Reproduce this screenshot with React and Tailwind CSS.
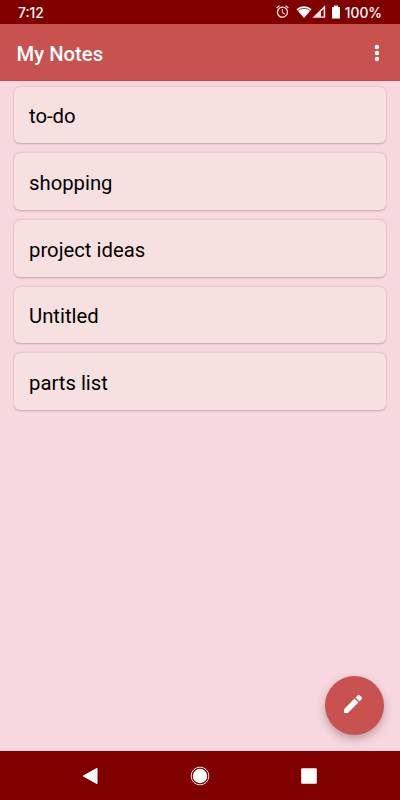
import React from "react";
import { MdAlarm } from "react-icons/md";

const notes = ["to-do", "shopping", "project ideas", "Untitled", "parts list"];

const StatusBar = () => {
  return (
    <div className="flex h-6 shrink-0 items-center bg-[#800000] pl-[18px] pr-[18px] font-['Inter',sans-serif] text-[13.8px] font-medium text-white">
      <span className="pt-[2px]">7:12</span>
      <div className="ml-auto flex h-6 items-center">
        <MdAlarm className="mr-[6px] mb-px text-[#f7e6e6]" size={15} />
        <svg width="16" height="14" viewBox="0 0 16 14">
          <path d="M0.5 4.2 C4.7 0.2 11.3 0.2 15.5 4.2 L8 13 Z" fill="#fff" />
          <path
            d="M2.2 5.6 C5.6 2.7 10.4 2.7 13.8 5.6"
            fill="none"
            stroke="#800000"
            strokeWidth="0.8"
          />
        </svg>
        <svg width="14" height="14" viewBox="0 0 14 14">
          <path d="M0.4 12.8 L13.2 0.2 V12.8 Z" fill="#f8e6e6" />
          <path d="M9 6.4 L11.6 3.9 V11.4 H9 Z" fill="#800000" />
        </svg>
        <svg className="ml-[5px] mr-[4px]" width="10" height="14" viewBox="0 0 10 14">
          <path d="M3 0.6 H7 V2 H9 V13.6 H1 V2 H3 Z" fill="#fff" />
        </svg>
        <span className="pt-[2px]">100%</span>
      </div>
    </div>
  );
};

const Header = () => {
  return (
    <header className="flex h-[57px] shrink-0 items-center justify-between border-b border-[#cc4444] bg-[#c75250] pl-[16.5px] pr-[20px] text-white">
      <h1 className="pt-[4px] text-[20.3px] font-medium">My Notes</h1>
      <svg className="mt-[2px]" width="6" height="18" viewBox="0 0 6 18" fill="currentColor">
        <circle cx="3" cy="3" r="2.2" />
        <circle cx="3" cy="9" r="2.2" />
        <circle cx="3" cy="15" r="2.2" />
      </svg>
    </header>
  );
};

const NavBar = () => {
  return (
    <nav className="flex h-[49px] shrink-0 items-center justify-between bg-[#800000] pl-[82px] pr-[82px]">
      <svg width="18" height="20" viewBox="0 0 18 20">
        <path d="M1.2 10 L15 2.3 V17.7 Z" fill="#fff" stroke="#fff" strokeWidth="1" strokeLinejoin="round" />
      </svg>
      <svg width="20" height="20" viewBox="0 0 20 20">
        <circle cx="10" cy="10" r="8.9" fill="none" stroke="#fff" strokeWidth="0.9" />
        <circle cx="10" cy="10" r="7.2" fill="#fff" />
      </svg>
      <svg width="18" height="20" viewBox="0 0 18 20">
        <rect x="1.2" y="2.2" width="15.6" height="15.6" rx="1.2" fill="#fff" />
      </svg>
    </nav>
  );
};

const App = () => {
  return (
    <div className="relative flex h-[800px] w-[400px] flex-col overflow-hidden bg-[#f7d8df] font-['Roboto',sans-serif]">
      <StatusBar />
      <Header />
      <main className="flex flex-1 flex-col gap-[10px] px-[14px] pt-[5.7px]">
        {notes.map((note, index) => (
          <div
            key={index}
            className="flex h-[56.7px] items-center rounded-[6px] bg-[#f7e0e0] pl-[15px] pt-[2.7px] text-[20.3px] text-black shadow-[0_0.5px_2px_rgba(90,40,50,0.3)]"
          >
            {note}
          </div>
        ))}
      </main>
      <button
        type="button"
        className="absolute right-[16px] bottom-[65px] flex size-[59.5px] items-center justify-center rounded-full bg-[#c75250] text-white shadow-[0_4px_8px_rgba(90,40,50,0.35)]"
      >
        <svg className="mr-[3px] mb-[2px]" width="20" height="20" viewBox="0 0 20 20" fill="currentColor">
          <path d="M1 15.3 V19 H4.9 L15.4 8.5 L11.5 4.6 Z" />
          <path d="M12.6 3.5 L14.3 1.8 C15.2 0.9 16.4 0.9 17.2 1.7 L18.3 2.8 C19.1 3.6 19.1 4.8 18.2 5.7 L16.5 7.4 Z" />
        </svg>
      </button>
      <NavBar />
    </div>
  );
};

export default App;
